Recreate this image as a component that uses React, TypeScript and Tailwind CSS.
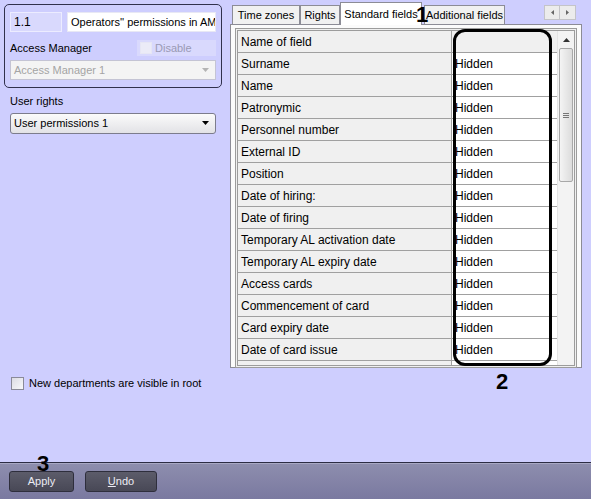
import React from 'react';

const rows = [
  'Surname',
  'Name',
  'Patronymic',
  'Personnel number',
  'External ID',
  'Position',
  'Date of hiring:',
  'Date of firing',
  'Temporary AL activation date',
  'Temporary AL expiry date',
  'Access cards',
  'Commencement of card',
  'Card expiry date',
  'Date of card issue',
  'Number of card holder',
];

function Arrow({ color = '#000' }: { color?: string }) {
  return (
    <svg width="7" height="4" viewBox="0 0 7 4">
      <path d="M0 0h7L3.5 4z" fill={color} />
    </svg>
  );
}

function Tab({ label, active, width }: { label: string; active?: boolean; width: string }) {
  if (active) {
    return (
      <div className={`relative z-10 -mb-px flex h-[23px] items-center justify-center whitespace-nowrap border border-b-0 border-[#8c8c96] bg-white text-[11px] text-black ${width}`}>
        {label}
      </div>
    );
  }
  return (
    <div className={`flex h-[19px] items-center justify-center whitespace-nowrap border border-b-0 border-[#8c8c96] bg-[#f1f1f1] text-[11px] text-black ${width}`}>
      {label}
    </div>
  );
}

function Grid() {
  return (
    <div className="relative flex h-[340px] border-[3px] border-double border-[#9c9c9c] bg-[#f0f0f0]">
      <div className="flex-1 overflow-hidden">
        <div className="flex h-[22px] border-b border-[#a0a0a0]">
          <div className="flex w-[214px] items-center border-r border-[#a0a0a0] pl-[3px]">Name of field</div>
          <div className="flex-1" />
        </div>
        {rows.map((r) => (
          <div key={r} className="flex h-[22px] border-b border-[#a0a0a0]">
            <div className="flex w-[214px] items-center border-r border-[#a0a0a0] pl-[3px]">{r}</div>
            <div className="flex flex-1 items-center bg-white pl-[3px]">Hidden</div>
          </div>
        ))}
      </div>
      <div className="flex w-[17px] flex-col border-l border-[#e4e4e4] bg-[#f3f3f3]">
        <div className="flex h-[17px] items-center justify-center">
          <svg width="7" height="4" viewBox="0 0 7 4">
            <path d="M3.5 0L7 4H0z" fill="#333" />
          </svg>
        </div>
        <div className="mx-[1px] flex h-[134px] items-center justify-center rounded-[2px] border border-[#a8a8a8] bg-gradient-to-r from-[#f4f4f4] to-[#dcdcdc]">
          <div className="flex flex-col gap-[1px]">
            <div className="h-px w-[6px] bg-[#777]" />
            <div className="h-px w-[6px] bg-[#777]" />
            <div className="h-px w-[6px] bg-[#777]" />
          </div>
        </div>
      </div>
    </div>
  );
}

export default function App() {
  return (
    <div
      className="relative flex h-[499px] w-[591px] flex-col overflow-hidden bg-[#cecefe] text-[12px] text-black"
      style={{ fontFamily: '"Liberation Sans", Arial, sans-serif' }}
    >
      <div className="flex h-[368px] pt-[2px]">
        {/* left column */}
        <div className="w-[230px] pl-[4px] pt-[2px] text-[11px]">
          <div className="w-[218px] rounded-[5px] border border-[#30304c] px-[5px] pb-[7px] pt-[7px]">
            <div className="flex gap-[5px]">
              <div className="flex h-[20px] w-[52px] items-center border border-[#ececff] bg-[#d9d9fd] pl-[3px] text-[12px]">1.1</div>
              <div className="flex h-[20px] flex-1 items-center overflow-hidden whitespace-nowrap border border-[#e8e8f4] bg-white pl-[3px]">
                Operators'' permissions in AM 1
              </div>
            </div>
            <div className="mt-[8px] flex h-[16px] items-center justify-between">
              <span>Access Manager</span>
              <div className="flex h-[16px] w-[79px] items-center gap-[3px] bg-[#d9d9fd] pl-[3px]">
                <div className="h-[12px] w-[12px] border border-[#e6e6f4] bg-[#ebebf7]" />
                <span className="text-[#9a9ab4]">Disable</span>
              </div>
            </div>
            <div className="mt-[4px] flex h-[20px] items-center justify-between border border-[#c4c4d4] bg-[#f4f4f4] pl-[3px] pr-[6px] text-[#a4a4a4]">
              <span>Access Manager 1</span>
              <Arrow color="#b4b4b4" />
            </div>
          </div>
          <div className="mt-[5px] pl-[6px]">User rights</div>
          <div className="ml-[6px] mt-[3px] flex h-[21px] w-[206px] items-center justify-between rounded-[3px] border border-[#7c7c8c] bg-gradient-to-b from-[#fbfbfb] to-[#e2e2e6] pl-[3px] pr-[6px]">
            <span>User permissions 1</span>
            <Arrow />
          </div>
        </div>

        {/* right column: tabs */}
        <div className="relative w-[352px]">
          <div className="flex h-[22px] items-end pl-[2px]">
            <Tab label="Time zones" width="w-[68px]" />
            <Tab label="Rights" width="w-[40px]" />
            <Tab label="Standard fields" width="w-[82px]" active />
            <div className="w-[2px]" />
            <Tab label="Additional fields" width="w-[81px]" />
            <div className="ml-auto mb-[4px] mr-[6px] flex">
              <div className="flex h-[15px] w-[16px] items-center justify-center border border-[#c4c4c8] bg-[#ececec]">
                <svg width="3" height="5" viewBox="0 0 3 5"><path d="M3 0v5L0 2.5z" fill="#666" /></svg>
              </div>
              <div className="flex h-[15px] w-[16px] items-center justify-center border border-l-0 border-[#c4c4c8] bg-[#ececec]">
                <svg width="3" height="5" viewBox="0 0 3 5"><path d="M0 0v5L3 2.5z" fill="#666" /></svg>
              </div>
            </div>
          </div>
          <div className="h-[344px] border border-[#8c8c96] bg-[#fbfbfb] px-[4px] pt-[3px]">
            <Grid />
          </div>

          {/* annotations */}
          <div className="absolute left-[223px] top-[27px] h-[337px] w-[99px] rounded-[12px] border-[3px] border-black" />
          <div className="absolute left-[186px] top-[2px] z-20 text-[22px] font-bold leading-none">1</div>
          <div className="absolute left-[266px] top-[369px] text-[22px] font-bold leading-none">2</div>
        </div>
      </div>

      <div className="mt-[7px] flex items-center gap-[5px] pl-[11px] text-[11px]">
        <div className="h-[13px] w-[13px] border border-[#8a8a98] bg-gradient-to-br from-[#dcdce4] to-[#f8f8fa]" />
        <span>New departments are visible in root</span>
      </div>

      <div className="flex-1" />

      <div className="relative h-[37px] border-t border-[#2c2c44] bg-gradient-to-b from-[#8e8eae] to-[#7a79a0] shadow-[inset_0_1px_0_#a8a8c4]">
        <div className="flex gap-[11px] pl-[9px] pt-[8px] text-[11px]">
          <div className="flex h-[21px] w-[65px] items-center justify-center rounded-[3px] border border-[#2e2e3c] bg-gradient-to-b from-[#5c5c6a] to-[#484856] text-[#ececf4]">
            Apply
          </div>
          <div className="flex h-[21px] w-[72px] items-center justify-center rounded-[3px] border border-[#2e2e3c] bg-gradient-to-b from-[#5c5c6a] to-[#484856] text-[#ececf4]">
            <span><span className="underline">U</span>ndo</span>
          </div>
        </div>
        <div className="absolute left-[37px] top-[-10px] text-[22px] font-bold leading-none">3</div>
      </div>
    </div>
  );
}
